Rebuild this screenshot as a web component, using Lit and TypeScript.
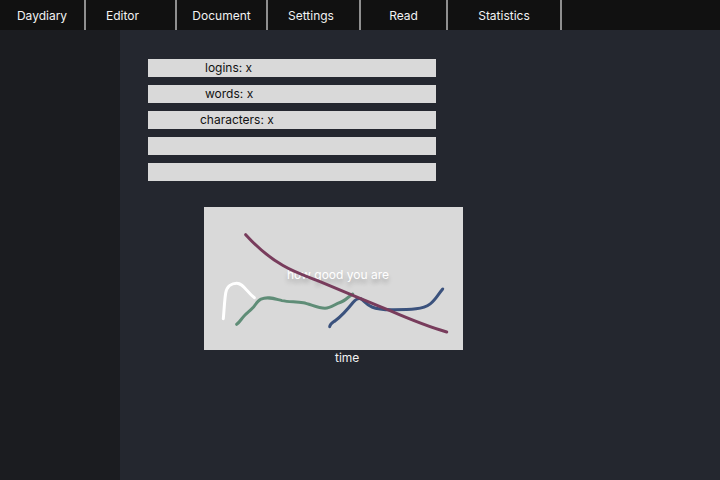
import { LitElement, html, css, svg } from "lit";
import { customElement } from "lit/decorators.js";

@customElement("top-nav")
class TopNav extends LitElement {
  static styles = css`
    :host {
      display: block;
      background: #111111;
    }
    .bar {
      display: flex;
      min-height: 30px;
    }
    .tab {
      box-sizing: border-box;
      display: flex;
      align-items: center;
      justify-content: center;
      width: 91px;
      padding-top: 2px;
      border-right: 2px solid #8f8f8f;
      color: #f2f2f2;
      text-decoration: none;
      line-height: 16px;
    }
    .home {
      width: 86px;
    }
    .editor,
    .settings {
      justify-content: flex-start;
      padding-left: 20px;
    }
    .settings {
      width: 93px;
    }
    .read {
      width: 87px;
    }
    .statistics {
      width: 114px;
    }
  `;

  render() {
    return html`
      <nav class="bar" aria-label="Main">
        <a class="tab home" href="#daydiary">Daydiary</a>
        <a class="tab editor" href="#editor">Editor</a>
        <a class="tab" href="#document">Document</a>
        <a class="tab settings" href="#settings">Settings</a>
        <a class="tab read" href="#read">Read</a>
        <a class="tab statistics" href="#statistics">Statistics</a>
      </nav>
    `;
  }
}

@customElement("stat-list")
class StatList extends LitElement {
  static styles = css`
    :host {
      display: block;
    }
    .list {
      display: flex;
      flex-direction: column;
      gap: 8px;
      max-width: 288px;
      margin: 0;
      padding: 0;
      list-style: none;
    }
    .row {
      box-sizing: border-box;
      min-height: 18px;
      padding-left: 57px;
      background: #d9d9d9;
      color: #111111;
      line-height: 18px;
    }
    .wide {
      padding-left: 52px;
    }
  `;

  render() {
    return html`
      <ul class="list">
        <li class="row">logins: x</li>
        <li class="row">words: x</li>
        <li class="row wide">characters: x</li>
        <li class="row"></li>
        <li class="row"></li>
      </ul>
    `;
  }
}

interface Line {
  color: string;
  d: string;
}

const LOWER_LINES: Line[] = [
  {
    color: "#ffffff",
    d: "M19.3 111.7C20 105 20.5 93 21.7 86C23 79 28 76.3 32.7 76.3C39 76.3 42 84 50.3 90.7",
  },
  {
    color: "#5f8d77",
    d: "M32.7 117.3C36 115 37 112 41 108C44 105 46 104 49.3 100.3C52 97 54 93.5 57 92.2C64 89 71 92 78 93.6C85 95 92 94.5 99.3 95.7C106 97 114 101.3 121 101.3C127 101.3 131 97 136 95.5C141 94 144 90 148.7 87",
  },
  {
    color: "#3b527d",
    d: "M125.7 119.7C126 116.5 129 115.5 131.5 113.5C139 108 143 103 149 95.5C152 92 155 90 158 92.5C161 95 163 98 168 100C175 103 183 102.7 190 102.7C198 102.7 206 102.5 212 101.8C229 100 231 91 238.7 82",
  },
];

@customElement("trend-chart")
class TrendChart extends LitElement {
  static styles = css`
    :host {
      display: block;
    }
    .figure {
      max-width: 259px;
      margin: 0;
    }
    .plot {
      display: block;
      width: 100%;
      background: #d9d9d9;
    }
    .line {
      fill: none;
      stroke-width: 3px;
      stroke-linecap: round;
      stroke-linejoin: round;
    }
    .label {
      fill: #ffffff;
      font-size: 12px;
      text-shadow: 0 4px 4px rgba(0, 0, 0, 0.25);
    }
    .axis {
      padding-left: 131px;
      color: #f2f2f2;
      line-height: 16px;
    }
  `;

  render() {
    return html`
      <figure class="figure">
        <svg class="plot" viewBox="0 0 259 143">
          ${LOWER_LINES.map(
            (l) => svg`<path class="line" stroke=${l.color} d=${l.d} />`
          )}
          <text class="label" x="83" y="72">how good you are</text>
          <path
            class="line"
            stroke="#783c5c"
            d="M41.7 27.7C52 39 64 50 79 58.5C90 65 103 69.5 116 74.7C130 80.5 143 86 156 91.3C166 95.3 176 99.5 186 103.7C204 111.5 223 119.5 242.7 125"
          />
        </svg>
        <figcaption class="axis">time</figcaption>
      </figure>
    `;
  }
}

@customElement("app-root")
class AppRoot extends LitElement {
  static styles = css`
    :host {
      display: flex;
      flex-direction: column;
      min-height: 100vh;
      background: #24272f;
      font-family: Inter, "Liberation Sans", sans-serif;
      font-size: 12px;
    }
    .body {
      display: flex;
      flex: 1;
    }
    .side {
      flex: 0 0 120px;
      background: #1b1c20;
    }
    .main {
      flex: 1;
      display: flex;
      flex-direction: column;
      gap: 26px;
      padding: 29px 28px;
    }
    .chart {
      margin-left: 56px;
    }
  `;

  render() {
    return html`
      <top-nav></top-nav>
      <div class="body">
        <aside class="side"></aside>
        <main class="main">
          <stat-list></stat-list>
          <trend-chart class="chart"></trend-chart>
        </main>
      </div>
    `;
  }
}
